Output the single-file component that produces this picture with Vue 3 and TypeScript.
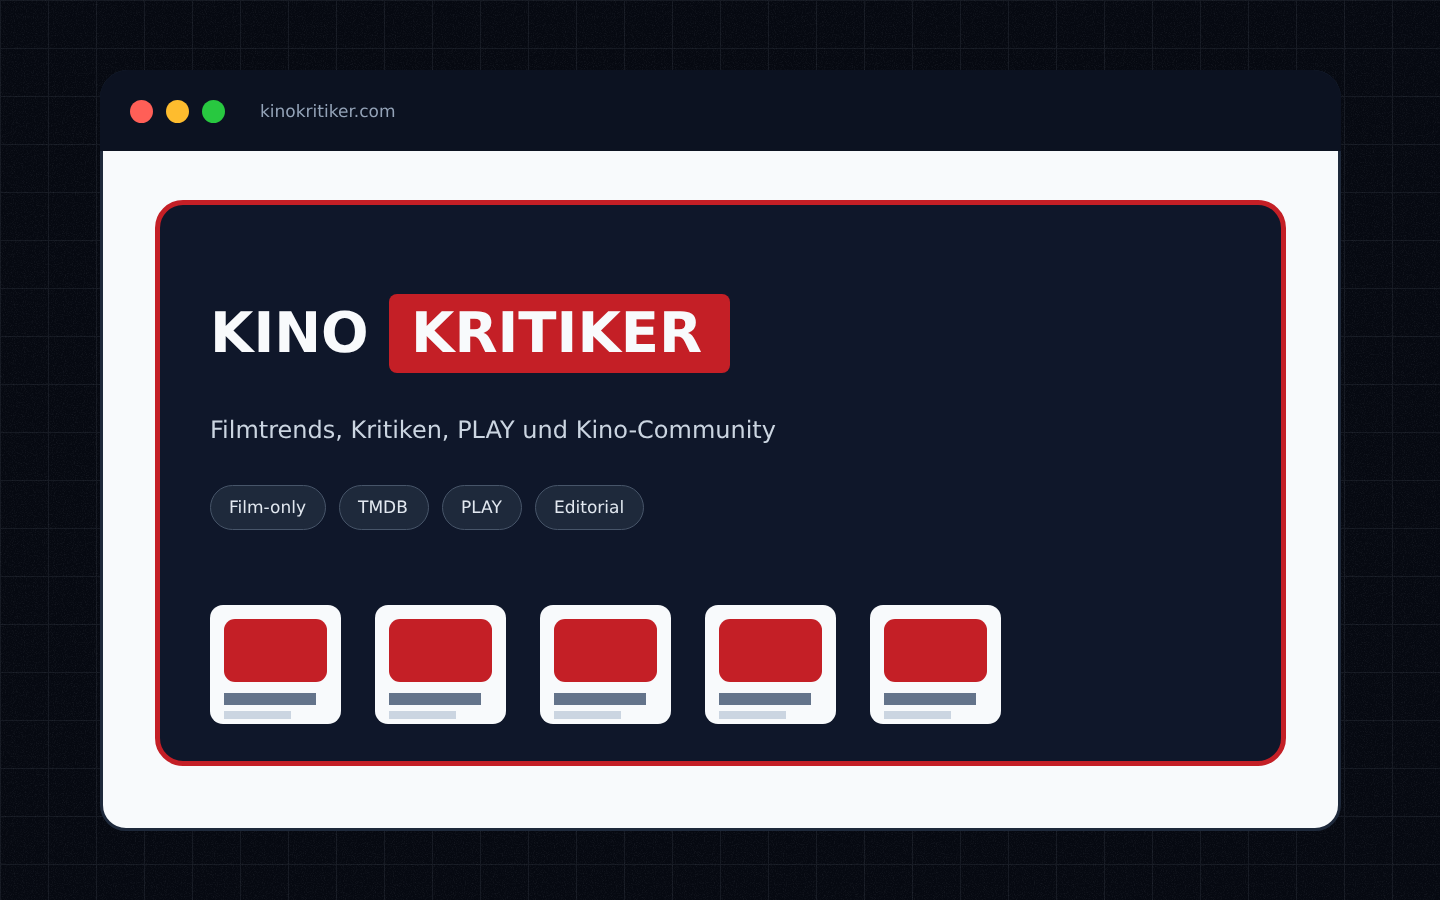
<script setup lang="ts">
const tags = [
  { label: 'Film-only', width: 116 },
  { label: 'TMDB', width: 90 },
  { label: 'PLAY', width: 80 },
  { label: 'Editorial', width: 109 },
]
const thumbs = [1, 2, 3, 4, 5]
</script>

<template>
  <div class="page">
    <svg class="noise" width="1440" height="900" aria-hidden="true">
      <filter id="grain">
        <feTurbulence type="fractalNoise" baseFrequency="0.9" numOctaves="2" seed="4" />
        <feColorMatrix values="0 0 0 0 0.6  0 0 0 0 0.65  0 0 0 0 0.75  0 0 0 0.9 -0.42" />
      </filter>
      <rect width="1440" height="900" filter="url(#grain)" opacity="0.2" />
    </svg>

    <div class="window">
      <div class="titlebar">
        <div class="dots">
          <span class="dot red"></span>
          <span class="dot yellow"></span>
          <span class="dot green"></span>
        </div>
        <span class="url">kinokritiker.com</span>
      </div>

      <div class="content">
        <div class="card">
          <div class="logo">
            <span class="kino">KINO</span>
            <span class="kritiker"><span class="kritiker-text">KRITIKER</span></span>
          </div>
          <p class="tagline">Filmtrends, Kritiken, PLAY und Kino-Community</p>
          <div class="tags">
            <span v-for="t in tags" :key="t.label" class="tag" :style="{ width: `${t.width}px` }"><span class="tag-text">{{ t.label }}</span></span>
          </div>
          <div class="thumbs">
            <div v-for="n in thumbs" :key="n" class="thumb">
              <div class="poster"></div>
              <div class="line-a"></div>
              <div class="line-b"></div>
            </div>
          </div>
        </div>
      </div>
    </div>
  </div>
</template>

<style>
html, body { margin: 0; background: #060911; }
</style>

<style scoped>
.page {
  position: relative; box-sizing: border-box; width: 1440px; height: 900px; overflow: hidden;
  padding: 70px 99px 69px 100px; font-family: "DejaVu Sans", sans-serif;
  text-rendering: geometricPrecision;
  background-color: #060911;
  background-image:
    linear-gradient(#151922 1px, transparent 1px),
    linear-gradient(90deg, #151922 1px, transparent 1px);
  background-size: 48px 48px;
}
.noise { position: absolute; inset: 0; }

/* own layer on the text: gives the soft greyscale edges of the reference */
.url, .kino, .kritiker-text, .tagline, .tag-text { will-change: transform; }

.window {
  position: relative; box-sizing: border-box; width: 1241px; height: 761px;
  display: flex; flex-direction: column;
  background: #f8fafc; border: 3px solid #1e293b; border-radius: 28px 28px 26px 26px;
}
.titlebar {
  box-sizing: border-box; flex: none; height: 81px; margin: -3px -3px 0; padding: 1px 0 0 30px;
  display: flex; align-items: center; gap: 35px;
  background: #0c1221; border-radius: 28px 28px 0 0;
}
.dots { display: flex; gap: 13px; }
.dot { width: 23px; height: 23px; border-radius: 50%; }
.red { background: #ff5f57; }
.yellow { background: #febc2e; }
.green { background: #28c840; }
.url { font-size: 17px; color: #94a3b8; margin-top: 1px; }

.content { flex: 1; padding: 49px 52px 0; }
.card {
  box-sizing: border-box; height: 566px; padding: 89px 50px 0;
  background: #0f172a; border: 5px solid #c41f26; border-radius: 28px;
}
.logo { display: flex; align-items: center; gap: 20px; height: 79px; }
.kino, .kritiker { font-size: 56px; font-weight: 700; color: #f8fafc; line-height: 79px; }
.kino { margin-top: -1px; }
.kritiker {
  box-sizing: border-box; width: 341px; padding-left: 22px;
  background: #c41f26; border-radius: 8px;
}
.kritiker-text { display: inline-block; }
.tagline { margin: 41px 0 0; font-size: 24px; line-height: 32px; color: #cbd5e1; }
.tags { display: flex; gap: 13px; margin-top: 39px; }
.tag {
  box-sizing: border-box; height: 45px; padding-left: 18px;
  display: flex; align-items: center;
  font-size: 17px; color: #e2e8f0;
  background: #1e293b; border: 1px solid #475569; border-radius: 23px;
}
.thumbs { display: flex; gap: 34px; margin-top: 75px; }
.thumb {
  box-sizing: border-box; width: 131px; height: 119px; padding: 14px;
  background: #f8fafc; border-radius: 13px;
}
.poster { height: 63px; background: #c41f26; border-radius: 11px; }
.line-a { width: 92px; height: 12px; margin-top: 11px; background: #64748b; }
.line-b { width: 67px; height: 8px; margin-top: 6px; background: #cbd5e1; }
</style>
